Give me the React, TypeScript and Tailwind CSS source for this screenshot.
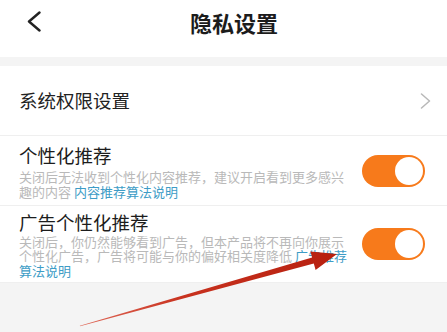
const FONT = "font-['Noto_Sans_CJK_SC','Noto_Sans',sans-serif]";

function Toggle() {
  return (
    <div className="flex h-[32px] w-[63px] shrink-0 items-center justify-end rounded-full bg-[#f77a1b] pr-[2px]">
      <div className="h-[28px] w-[28px] rounded-full bg-white" />
    </div>
  );
}

function Divider() {
  return <div className="h-px bg-[#efefef]" />;
}

export default function App() {
  return (
    <div
      className={`relative h-[332px] w-[447px] overflow-hidden bg-[#f4f4f4] ${FONT}`}
    >
      <header className="flex h-[57px] items-start bg-white pl-[27px] pt-[11px]">
        <svg width="14" height="21" viewBox="0 0 14 21" className="shrink-0">
          <polyline
            points="12.5,1.5 2,10.5 12.5,19.5"
            fill="none"
            stroke="#222"
            strokeWidth="2.4"
            strokeLinecap="round"
            strokeLinejoin="round"
          />
        </svg>
        <h1 className="ml-[149px] text-[22px] font-bold leading-[22px] text-[#1c1c1c]">
          隐私设置
        </h1>
      </header>

      <div className="mt-[9px] bg-white">
        <div className="flex h-[69px] items-center justify-between pl-[19px] pr-[16px]">
          <span className="text-[18.5px] text-[#222]">系统权限设置</span>
          <svg width="11" height="16" viewBox="0 0 11 16">
            <polyline
              points="1.5,1 9.5,8 1.5,15"
              fill="none"
              stroke="#b8b8b8"
              strokeWidth="1.5"
              strokeLinecap="round"
              strokeLinejoin="round"
            />
          </svg>
        </div>
        <Divider />

        <div className="flex h-[69px] items-center justify-between pl-[19px] pr-[22px]">
          <div className="pt-[1px]">
            <div className="text-[18.5px] leading-[24px] text-[#1c1c1c]">个性化推荐</div>
            <div className="mt-[2px] text-[13px] leading-[15px] text-[#b9b9b9]">
              关闭后无法收到个性化内容推荐，建议开启看到更多感兴
              <br />
              趣的内容 <span className="text-[#3d9cc6]">内容推荐算法说明</span>
            </div>
          </div>
          <Toggle />
        </div>
        <Divider />

        <div className="flex h-[76px] items-center justify-between pl-[19px] pr-[22px]">
          <div>
            <div className="text-[18.5px] leading-[24px] text-[#1c1c1c]">广告个性化推荐</div>
            <div className="mt-[1px] text-[13px] leading-[14.5px] text-[#b9b9b9]">
              关闭后，你仍然能够看到广告，但本产品将不再向你展示
              <br />
              个性化广告，广告将可能与你的偏好相关度降低{" "}
              <span className="text-[#3d9cc6]">广告推荐</span>
              <br />
              <span className="text-[#3d9cc6]">算法说明</span>
            </div>
          </div>
          <Toggle />
        </div>
        <Divider />
      </div>

      {/* red annotation arrow drawn over the screen */}
      <svg
        className="pointer-events-none absolute left-0 top-0"
        width="447"
        height="332"
        viewBox="0 0 447 332"
      >
        <defs>
          <linearGradient id="arrowFill" x1="80" y1="326" x2="337" y2="254" gradientUnits="userSpaceOnUse">
            <stop offset="0" stopColor="#e06a5a" />
            <stop offset="0.4" stopColor="#c8321f" />
            <stop offset="1" stopColor="#b7200f" />
          </linearGradient>
        </defs>
        <polygon
          points="80,326.3 313.8,263.6 315.6,270 337,254 310.4,251.4 312.1,257.6 79.8,325.7"
          fill="url(#arrowFill)"
        />
      </svg>
    </div>
  );
}
